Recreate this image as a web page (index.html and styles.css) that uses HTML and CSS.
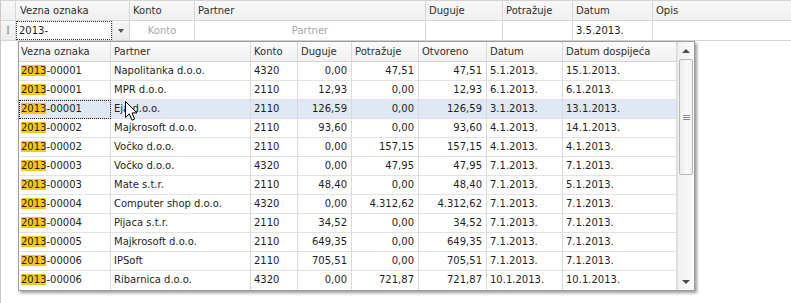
FILE: index.html
```html
<!DOCTYPE html>
<html>
<head>
<meta charset="utf-8">
<link rel="stylesheet" href="styles.css">
</head>
<body>
<div class="grid">
  <div class="hdr">
    <div class="c ind"></div>
    <div class="c">Vezna oznaka</div>
    <div class="c">Konto</div>
    <div class="c">Partner</div>
    <div class="c">Duguje</div>
    <div class="c">Potražuje</div>
    <div class="c">Datum</div>
    <div class="c last">Opis</div>
  </div>
  <div class="edit">
    <div class="c ind"><span class="ibeam">I</span></div>
    <div class="c combo"><span class="ctext">2013-</span><span class="dd"><span class="tri"></span></span></div>
    <div class="c ph">Konto</div>
    <div class="c ph">Partner</div>
    <div class="c"></div>
    <div class="c"></div>
    <div class="c">3.5.2013.</div>
    <div class="c last"></div>
  </div>

  <div class="popup">
    <div class="ptable">
      <div class="prow phead">
        <div class="p">Vezna oznaka</div>
        <div class="p">Partner</div>
        <div class="p">Konto</div>
        <div class="p">Duguje</div>
        <div class="p">Potražuje</div>
        <div class="p">Otvoreno</div>
        <div class="p">Datum</div>
        <div class="p">Datum dospijeća</div>
      </div>
      <div class="prow"><div class="p"><span class="hl">2013</span>-00001</div><div class="p">Napolitanka d.o.o.</div><div class="p">4320</div><div class="p n">0,00</div><div class="p n">47,51</div><div class="p n">47,51</div><div class="p">5.1.2013.</div><div class="p">15.1.2013.</div></div>
      <div class="prow"><div class="p"><span class="hl">2013</span>-00001</div><div class="p">MPR d.o.o.</div><div class="p">2110</div><div class="p n">12,93</div><div class="p n">0,00</div><div class="p n">12,93</div><div class="p">6.1.2013.</div><div class="p">6.1.2013.</div></div>
      <div class="prow sel"><div class="p focus"><span class="hl">2013</span>-00001</div><div class="p">Eja d.o.o.</div><div class="p">2110</div><div class="p n">126,59</div><div class="p n">0,00</div><div class="p n">126,59</div><div class="p">3.1.2013.</div><div class="p">13.1.2013.</div></div>
      <div class="prow"><div class="p"><span class="hl">2013</span>-00002</div><div class="p">Majkrosoft d.o.o.</div><div class="p">2110</div><div class="p n">93,60</div><div class="p n">0,00</div><div class="p n">93,60</div><div class="p">4.1.2013.</div><div class="p">14.1.2013.</div></div>
      <div class="prow"><div class="p"><span class="hl">2013</span>-00002</div><div class="p">Vočko d.o.o.</div><div class="p">2110</div><div class="p n">0,00</div><div class="p n">157,15</div><div class="p n">157,15</div><div class="p">4.1.2013.</div><div class="p">4.1.2013.</div></div>
      <div class="prow"><div class="p"><span class="hl">2013</span>-00003</div><div class="p">Vočko d.o.o.</div><div class="p">4320</div><div class="p n">0,00</div><div class="p n">47,95</div><div class="p n">47,95</div><div class="p">7.1.2013.</div><div class="p">7.1.2013.</div></div>
      <div class="prow"><div class="p"><span class="hl">2013</span>-00003</div><div class="p">Mate s.t.r.</div><div class="p">2110</div><div class="p n">48,40</div><div class="p n">0,00</div><div class="p n">48,40</div><div class="p">7.1.2013.</div><div class="p">5.1.2013.</div></div>
      <div class="prow"><div class="p"><span class="hl">2013</span>-00004</div><div class="p">Computer shop d.o.o.</div><div class="p">4320</div><div class="p n">0,00</div><div class="p n">4.312,62</div><div class="p n">4.312,62</div><div class="p">7.1.2013.</div><div class="p">7.1.2013.</div></div>
      <div class="prow"><div class="p"><span class="hl">2013</span>-00004</div><div class="p">Pijaca s.t.r.</div><div class="p">2110</div><div class="p n">34,52</div><div class="p n">0,00</div><div class="p n">34,52</div><div class="p">7.1.2013.</div><div class="p">7.1.2013.</div></div>
      <div class="prow"><div class="p"><span class="hl">2013</span>-00005</div><div class="p">Majkrosoft d.o.o.</div><div class="p">2110</div><div class="p n">649,35</div><div class="p n">0,00</div><div class="p n">649,35</div><div class="p">7.1.2013.</div><div class="p">7.1.2013.</div></div>
      <div class="prow"><div class="p"><span class="hl">2013</span>-00006</div><div class="p">IPSoft</div><div class="p">2110</div><div class="p n">705,51</div><div class="p n">0,00</div><div class="p n">705,51</div><div class="p">7.1.2013.</div><div class="p">7.1.2013.</div></div>
      <div class="prow lastrow"><div class="p"><span class="hl">2013</span>-00006</div><div class="p">Ribarnica d.o.o.</div><div class="p">4320</div><div class="p n">0,00</div><div class="p n">721,87</div><div class="p n">721,87</div><div class="p">10.1.2013.</div><div class="p">10.1.2013.</div></div>
    </div>
    <div class="scroll">
      <div class="sbtn"><span class="up"></span></div>
      <div class="track">
        <div class="thumb"><span class="grip"></span></div>
      </div>
      <div class="sbtn"><span class="down"></span></div>
    </div>
  </div>

  <svg class="cursor" width="14" height="22" viewBox="0 0 14 22">
    <path d="M0.5 0.5 L0.5 16.5 L4.3 12.8 L7 19.2 L9.6 18.1 L7 11.9 L12 11.9 Z" fill="#fff" stroke="#000" stroke-width="1" stroke-linejoin="miter"/>
  </svg>
</div>
</body>
</html>
```

FILE: styles.css
```css
* { box-sizing: border-box; }
html, body { margin: 0; padding: 0; background: #fff; }
.grid {
  position: relative;
  width: 791px;
  height: 303px;
  overflow: hidden;
  background: #fff;
  border-left: 1px solid #c9c9c9;
  font-family: "DejaVu Sans", "Liberation Sans", sans-serif;
  font-size: 10px;
  color: #1e1e1e;
}
.hdr, .edit {
  display: grid;
  grid-template-columns: 15px 114px 65px 231px 77px 70px 80px 138px;
}
.hdr {
  height: 21px;
  border-top: 1px solid #d4d4d4;
  background: linear-gradient(#f8f8f8, #efefef);
  color: #2e2e2e;
}
.hdr .c, .edit .c {
  border-right: 1px solid #d6d6d6;
  border-bottom: 1px solid #d6d6d6;
  padding: 0 3px;
  line-height: 19px;
  white-space: nowrap;
  overflow: hidden;
}
.hdr .c:nth-child(2) { padding-left: 4px; }
.hdr .last, .edit .last { border-right: none; }
.edit { height: 20px; background: #fff; }
.edit .c { line-height: 19px; }
.edit .ind { background: linear-gradient(#f6f6f6, #ececec); padding: 0; text-align: center; }
.ibeam { color: #8a8a8a; font-family: "Liberation Serif", serif; font-size: 12px; line-height: 19px; }
.edit .combo {
  display: flex;
  padding: 0;
}
.ctext {
  flex: 1;
  padding-left: 3px;
  outline: 1px dotted #333;
  outline-offset: -1px;
  line-height: 19px;
}
.dd {
  width: 17px;
  display: flex;
  align-items: center;
  justify-content: center;
  background: linear-gradient(#f7f7f7, #e9e9e9);
  border-left: 1px solid #e0e0e0;
}
.tri {
  width: 0; height: 0;
  border-left: 3.5px solid transparent;
  border-right: 3.5px solid transparent;
  border-top: 4px solid #555;
  margin-top: 1px;
}
.ph { color: #a8a8a8; text-align: center; }

.popup {
  position: absolute;
  left: 17px;
  top: 41px;
  width: 677px;
  height: 250px;
  display: flex;
  border: 1px solid #9d9d9d;
  background: #fff;
  box-shadow: 2px 2px 3px rgba(0,0,0,0.4);
}
.ptable { width: 658px; }
.prow {
  display: grid;
  grid-template-columns: 92px 140px 47px 54px 67px 68px 76px 114px;
  height: 19px;
}
.prow .p {
  border-right: 1px solid #dadada;
  border-bottom: 1px solid #e2e2e2;
  padding: 0 2px 0 3px;
  line-height: 18px;
  white-space: nowrap;
  overflow: hidden;
}
.prow .p:first-child { padding-left: 2px; }
.prow .n { text-align: right; padding-right: 4px; }
.phead { height: 20px; background: linear-gradient(#fbfbfb, #f1f1f1); color: #2e2e2e; }
.phead .p { line-height: 19px; border-bottom-color: #d4d4d4; }
.lastrow .p { border-bottom: none; }
.sel { background: #dfe8f4; }
.focus { outline: 1px dotted #222; outline-offset: -1px; }
.hl { background: #fbc61a; }

.scroll {
  width: 17px;
  display: flex;
  flex-direction: column;
  background: linear-gradient(90deg, #f0f0f0, #fbfbfb);
  border-left: 1px solid #e4e4e4;
}
.sbtn {
  height: 17px;
  display: flex;
  align-items: center;
  justify-content: center;
}
.up, .down {
  width: 0; height: 0;
  border-left: 4px solid transparent;
  border-right: 4px solid transparent;
}
.up { border-bottom: 4px solid #4a4a4a; }
.down { border-top: 4px solid #4a4a4a; }
.track { flex: 1; padding: 0 1px 0 1px; }
.thumb {
  height: 116px;
  border: 1px solid #b8b8b8;
  border-radius: 2px;
  background: linear-gradient(90deg, #ededed, #fafafa 60%, #f0f0f0);
  display: flex;
  align-items: center;
  justify-content: center;
}
.grip {
  width: 7px;
  height: 5px;
  border-top: 1px solid #8a8a8a;
  border-bottom: 1px solid #8a8a8a;
  background: linear-gradient(transparent 1px, #8a8a8a 1px, #8a8a8a 2px, transparent 2px);
}
.cursor {
  position: absolute;
  left: 124px;
  top: 101px;
}
```
